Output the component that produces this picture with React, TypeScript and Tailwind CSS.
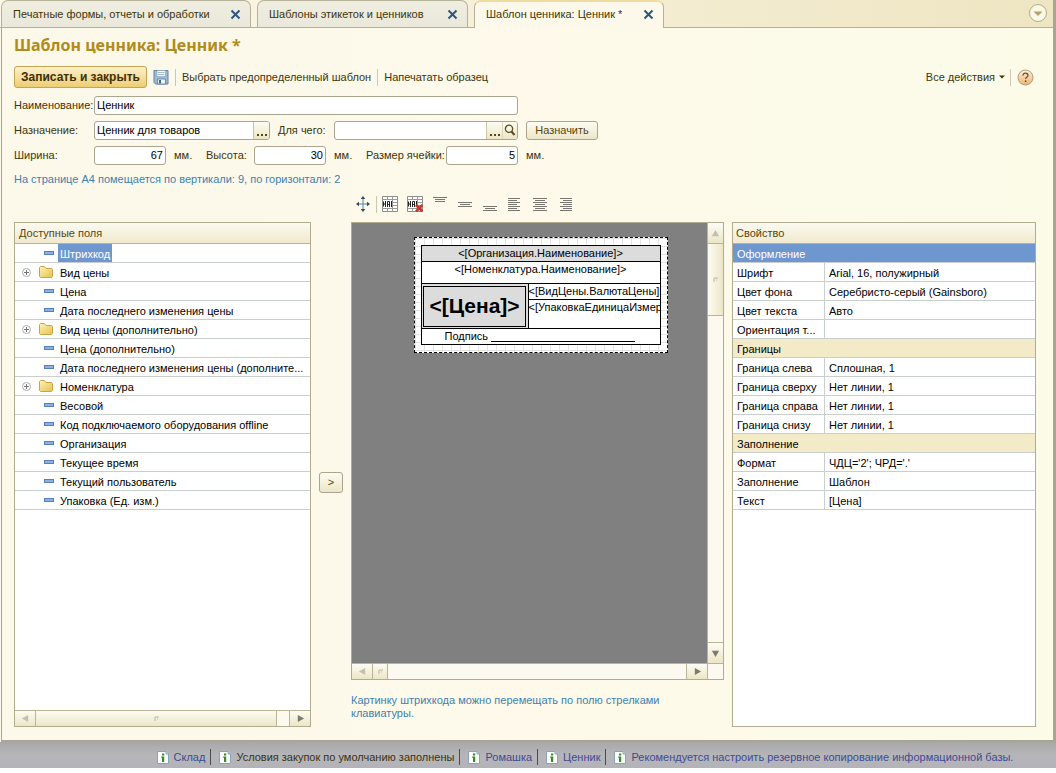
import React from "react";

type Field = { name: string; group?: boolean; selected?: boolean };
type Property = { name: string; value?: string; section?: boolean; selected?: boolean };

const fields: Field[] = [
  { name: "Штрихкод", selected: true },
  { name: "Вид цены", group: true },
  { name: "Цена" },
  { name: "Дата последнего изменения цены" },
  { name: "Вид цены (дополнительно)", group: true },
  { name: "Цена (дополнительно)" },
  { name: "Дата последнего изменения цены (дополните..." },
  { name: "Номенклатура", group: true },
  { name: "Весовой" },
  { name: "Код подключаемого оборудования offline" },
  { name: "Организация" },
  { name: "Текущее время" },
  { name: "Текущий пользователь" },
  { name: "Упаковка (Ед. изм.)" },
];

const properties: Property[] = [
  { name: "Оформление", section: true, selected: true },
  { name: "Шрифт", value: "Arial, 16, полужирный" },
  { name: "Цвет фона", value: "Серебристо-серый (Gainsboro)" },
  { name: "Цвет текста", value: "Авто" },
  { name: "Ориентация т...", value: "" },
  { name: "Границы", section: true },
  { name: "Граница слева", value: "Сплошная, 1" },
  { name: "Граница сверху", value: "Нет линии, 1" },
  { name: "Граница справа", value: "Нет линии, 1" },
  { name: "Граница снизу", value: "Нет линии, 1" },
  { name: "Заполнение", section: true },
  { name: "Формат", value: "ЧДЦ='2'; ЧРД='.'" },
  { name: "Заполнение", value: "Шаблон" },
  { name: "Текст", value: "[Цена]" },
];

const messages = [
  { text: "Склад" },
  { text: "Условия закупок по умолчанию заполнены", plain: true },
  { text: "Ромашка" },
  { text: "Ценник" },
  { text: "Рекомендуется настроить резервное копирование информационной базы." },
];

const boxClass =
  "flex h-[19px] overflow-hidden rounded-[3px] border border-[#aaa58c] bg-white text-black";
const inputClass = "w-full min-w-0 bg-transparent px-[2px] text-[11px] leading-[17px] outline-none";
const faceClass = "bg-linear-to-b from-[#fdfcf2] to-[#ece6c8] text-[#54470f]";

function CloseIcon() {
  return (
    <svg width="11" height="11" viewBox="0 0 11 11" fill="none" stroke="#2d5580" strokeWidth="2">
      <path d="M1.5 1.5 9.5 9.5M9.5 1.5 1.5 9.5" />
    </svg>
  );
}

function Tab({ title, active, width }: { title: string; active?: boolean; width: string }) {
  return (
    <div
      className={`flex items-center justify-between rounded-t-[7px] border border-b-0 border-[#b5b199] pl-[11px] pr-[9px] ${width} ${
        active
          ? "h-7 border-t-2 border-t-[#efdca0] bg-[#fdf9ea] pb-[2px]"
          : "h-[27px] bg-linear-to-b from-[#f0eee0] to-[#e9e8da]"
      }`}
    >
      <button role="tab" aria-selected={!!active} className="truncate text-[11px] text-[#403408]">
        {title}
      </button>
      <button aria-label={`Закрыть: ${title}`}>
        <CloseIcon />
      </button>
    </div>
  );
}

function Separator() {
  return <span className="h-[17px] w-px bg-[#cbc7b2]" />;
}

function SaveIcon() {
  return (
    <svg width="16" height="16" viewBox="0 0 16 16">
      <path d="M1 1.5h14v13.5H2.5L1 13.5Z" fill="#9dbdd6" stroke="#5e83a3" />
      <path d="M4 1.5h8.5v6H4z" fill="#f3f8fb" stroke="#7f9fb9" strokeWidth=".6" />
      <path d="M5 3.5h6.5M5 5.5h6.5" stroke="#9ab" strokeWidth=".8" />
      <path d="M4.5 10h8v5h-8z" fill="#eef4f8" stroke="#557a9a" strokeWidth=".8" />
      <path d="M6 11h2v3.5H6z" fill="#3f658a" />
    </svg>
  );
}

function HelpIcon() {
  return (
    <svg width="17" height="17" viewBox="0 0 17 17">
      <defs>
        <linearGradient id="help" x1="0" y1="0" x2="0" y2="1">
          <stop offset="0" stopColor="#fdf0df" />
          <stop offset="1" stopColor="#eeb36b" />
        </linearGradient>
      </defs>
      <circle cx="8.500" cy="8.500" r="7.500" fill="url(#help)" stroke="#b49a7c" />
      <path
        d="M6 6.600C6 4.900 7.100 4.200 8.500 4.200S11 5 11 6.400C11 8 8.600 8 8.600 10"
        fill="none"
        stroke="#6b5334"
        strokeWidth="1.300"
      />
      <circle cx="8.600" cy="12.200" r=".9" fill="#6b5334" />
    </svg>
  );
}

function SearchIcon() {
  return (
    <svg width="12" height="13" viewBox="0 0 12 13" fill="none" stroke="#5a4c1c">
      <circle cx="5" cy="4.800" r="3.600" strokeWidth="1.300" />
      <path d="M7.500 7.500 10.500 11" strokeWidth="2" />
    </svg>
  );
}

function DotsIcon() {
  return (
    <svg width="12" height="17" viewBox="0 0 12 17" fill="#54470f">
      <path d="M1 12h2v2H1zM5 12h2v2H5zM9 12h2v2H9z" />
    </svg>
  );
}

function MoveIcon() {
  return (
    <svg width="16" height="16" viewBox="0 0 16 16">
      <path d="M8 2.500v11M2.500 8h11" stroke="#4d86b3" />
      <path
        d="M8 0 10.300 3H5.700ZM8 16l2.300-3H5.700ZM1 8l3-2.300v4.600ZM15 8l-3-2.300v4.600Z"
        fill="#34495c"
      />
    </svg>
  );
}

function CellIcon({ remove }: { remove?: boolean }) {
  return (
    <svg width="16" height="16" viewBox="0 0 16 16">
      <path d="M.5.5h15v15H.5z" fill="#fff" stroke="#8a8a8a" />
      <path
        d="M.5 3.500h15M.5 12.500h15M5.500.5v3M10.500.5v15M5.500 12.500v3M10.500 6.500h5M10.500 9.500h5"
        stroke="#9a9a9a"
        fill="none"
      />
      <path d="M1.500 5.500v5M3.500 5v6M1.500 8h2M5.500 11V5.500h2V11M5.500 8.500h2" stroke="#222" fill="none" />
      <path d="M9.500 5v6" stroke="#222" />
      {remove && (
        <path d="M9 9 15.500 15.500M15.500 9 9 15.500" stroke="#c3392f" strokeWidth="2.600" />
      )}
    </svg>
  );
}

function LinesIcon({ d }: { d: string }) {
  return (
    <svg width="16" height="16" viewBox="0 0 16 16" fill="none" stroke="#77776f">
      <path d={d} />
    </svg>
  );
}

const alignments = [
  { label: "По верху", d: "M1 1.500h14M3 3.500h10M3 5.500h10" },
  { label: "По центру по вертикали", d: "M1 6.500h14M3 8.500h10M1 10.500h14" },
  { label: "По низу", d: "M1 10.500h14M3 12.500h10M1 14.500h14" },
  {
    label: "По левому краю",
    d: "M1 2.500h12M1 4.500h9M1 6.500h12M1 8.500h9M1 10.500h12M1 12.500h9M1 14.500h12",
  },
  {
    label: "По центру",
    d: "M1 2.500h14M3 4.500h10M1 6.500h14M3 8.500h10M1 10.500h14M3 12.500h10M1 14.500h14",
  },
  {
    label: "По правому краю",
    d: "M3 2.500h12M6 4.500h9M3 6.500h12M6 8.500h9M3 10.500h12M6 12.500h9M3 14.500h12",
  },
];

function FolderIcon() {
  return (
    <svg width="14" height="12" viewBox="0 0 14 12">
      <defs>
        <linearGradient id="folder" x1="0" y1="0" x2="1" y2="1">
          <stop offset="0" stopColor="#fff3b8" />
          <stop offset="1" stopColor="#e6c04e" />
        </linearGradient>
      </defs>
      <path
        d="M.5 1.500 1.500.5h4l1.500 2h5.500l1 1v7l-1 1h-11l-1-1Z"
        fill="url(#folder)"
        stroke="#c8a548"
      />
    </svg>
  );
}

function ExpandIcon() {
  return (
    <svg width="9" height="9" viewBox="0 0 9 9" fill="none">
      <circle cx="4.500" cy="4.500" r="4" stroke="#aaa" />
      <path d="M2 4.500h5M4.500 2v5" stroke="#777" />
    </svg>
  );
}

function InfoIcon() {
  return (
    <svg width="12" height="13" viewBox="0 0 12 13">
      <path d="M.5.5h8.500L11.500 3v9.500H.5Z" fill="#fafdff" stroke="#8aa3b5" />
      <path d="M9 .5V3h2.500" fill="#cfe0ea" stroke="#8aa3b5" />
      <path d="M5 2.500h2.200v2H5zM4.200 5.500h3V11H5V6.800h-.8z" fill="#3d8527" />
    </svg>
  );
}

function Arrow({ dir, dim }: { dir: "left" | "right" | "up" | "down"; dim?: boolean }) {
  const d = {
    left: "M8 1v8L1 5Z",
    right: "M2 1v8l7-4Z",
    up: "M1 8h8L5 1Z",
    down: "M1 2h8L5 9Z",
  }[dir];
  return (
    <svg width="9" height="9" viewBox="0 0 10 10">
      <path d={d} fill={dim ? "#c3c0b2" : "#7d7a6e"} />
    </svg>
  );
}

function ScrollButton(props: { dir: "left" | "right" | "up" | "down"; dim?: boolean; label: string }) {
  const edge = {
    left: "w-[21px] border-r",
    right: "w-[21px] border-l",
    up: "h-[21px] border-b",
    down: "h-[21px] border-t",
  }[props.dir];
  return (
    <button
      aria-label={props.label}
      className={`flex shrink-0 items-center justify-center border-[#b9b594] ${faceClass} ${edge}`}
    >
      <Arrow dir={props.dir} dim={props.dim} />
    </button>
  );
}

function Grip() {
  return (
    <svg width="5" height="5" viewBox="0 0 5 5" fill="none" stroke="#b9b6a4">
      <path d="M1 5V1h4M3 3h1" />
    </svg>
  );
}

function FieldsPanel() {
  return (
    <section className="flex min-w-0 flex-col border border-[#b1ac90] bg-white">
      <h2 className="h-[21px] border-b border-[#b9b594] bg-linear-to-b from-[#fbfaf0] to-[#f1e9cd] pl-1 leading-[20px] text-[#54470f]">
        Доступные поля
      </h2>
      <ul role="tree" aria-label="Доступные поля" className="flex-1 text-black">
        {fields.map((f) => (
          <li
            key={f.name}
            role="treeitem"
            aria-selected={!!f.selected}
            className="flex h-[19px] items-center border-b border-[#c9cfcf]"
          >
            <span className="flex w-[24px] shrink-0 items-center pl-[7px]">
              {f.group && <ExpandIcon />}
            </span>
            <span className="flex w-[19px] shrink-0 items-center">
              {f.group ? (
                <FolderIcon />
              ) : (
                <span className="ml-[5px] h-[4px] w-[10px] border border-[#5580bd] bg-[#8fb0dc]" />
              )}
            </span>
            <span
              className={`truncate px-[2px] pt-[2px] leading-[16px] ${
                f.selected ? "bg-[#6f97cf] text-white" : ""
              }`}
            >
              {f.name}
            </span>
          </li>
        ))}
      </ul>
      <div className="flex h-4 border-t border-[#b9b594] bg-[#fcfaf0]">
        <ScrollButton dir="left" dim label="Прокрутить влево" />
        <div
          className={`flex flex-1 items-center justify-center border-r border-[#b9b594] ${faceClass}`}
        >
          <Grip />
        </div>
        <div className="w-3" />
        <ScrollButton dir="right" label="Прокрутить вправо" />
      </div>
    </section>
  );
}

function PriceTag() {
  return (
    <div className="border border-dashed border-black bg-white bg-[linear-gradient(to_right,#e4e4e4_1px,transparent_1px),linear-gradient(to_bottom,#e4e4e4_1px,transparent_1px)] bg-[size:9px_8px] px-[6px] py-[7px] text-black">
      <table className="w-[240px] table-fixed border-collapse bg-white">
        <colgroup>
          <col className="w-[107px]" />
          <col />
        </colgroup>
        <tbody>
          <tr className="h-[16px]">
            <td colSpan={2} className="border border-black bg-[#dcdcdc] p-0 text-center leading-[15px]">
              &lt;[Организация.Наименование]&gt;
            </td>
          </tr>
          <tr className="h-[22px]">
            <td colSpan={2} className="border border-black p-0 text-center align-top leading-[15px]">
              &lt;[Номенклатура.Наименование]&gt;
            </td>
          </tr>
          <tr className="h-[16px]">
            <td
              rowSpan={2}
              className="border border-black bg-[#dcdcdc] p-0 text-center text-[21px] font-bold leading-[22px] outline outline-1 -outline-offset-3 outline-black"
            >
              &lt;[Цена]&gt;
            </td>
            <td className="overflow-hidden whitespace-nowrap border border-black p-0 leading-[15px]">
              &lt;[ВидЦены.ВалютаЦены]&gt;
            </td>
          </tr>
          <tr className="h-[29px]">
            <td className="overflow-hidden whitespace-nowrap border border-black p-0 align-top leading-[15px]">
              &lt;[УпаковкаЕдиницаИзмер
            </td>
          </tr>
          <tr className="h-[16px]">
            <td colSpan={2} className="border border-black p-0 leading-[15px]">
              <span className="flex items-end pl-[23px]">
                Подпись
                <span className="mb-[2px] ml-[3px] w-[144px] border-b border-black" />
              </span>
            </td>
          </tr>
        </tbody>
      </table>
    </div>
  );
}

function DesignCanvas() {
  return (
    <div className="grid flex-1 grid-cols-[1fr_16px] grid-rows-[1fr_16px] border border-[#b1ac90] bg-[#fcfaf0]">
      <div className="flex min-w-0 items-start justify-center overflow-hidden bg-[#808080] pl-[22px] pt-[14px]">
        <PriceTag />
      </div>
      <div className="flex flex-col border-l border-[#b9b594]">
        <ScrollButton dir="up" dim label="Прокрутить вверх" />
        <div className="flex h-[72px] items-center justify-center border-b border-[#b9b594] bg-linear-to-r from-[#fdfcf2] to-[#ece6c8]">
          <Grip />
        </div>
        <div className="flex-1" />
        <ScrollButton dir="down" label="Прокрутить вниз" />
      </div>
      <div className="flex border-t border-[#b9b594]">
        <ScrollButton dir="left" dim label="Прокрутить влево" />
        <div className={`flex w-[15px] items-center justify-center border-r border-[#b9b594] ${faceClass}`}>
          <Grip />
        </div>
        <div className="flex-1" />
        <ScrollButton dir="right" label="Прокрутить вправо" />
      </div>
      <div className="border-l border-t border-[#b9b594]" />
    </div>
  );
}

function PropertiesPanel() {
  return (
    <section className="min-w-0 border border-[#b1ac90] bg-white text-black">
      <table className="w-full table-fixed border-separate border-spacing-0">
        <colgroup>
          <col className="w-[92px]" />
          <col />
        </colgroup>
        <thead>
          <tr>
            <th
              colSpan={2}
              className="border-b border-[#b9b594] bg-linear-to-b from-[#fbfaf0] to-[#f1e9cd] p-0 pl-[3px] text-left font-normal leading-[20px] text-[#54470f]"
            >
              Свойство
            </th>
          </tr>
        </thead>
        <tbody>
          {properties.map((p, i) =>
            p.section ? (
              <tr key={i} className={p.selected ? "bg-[#6f97cf] text-white" : "bg-[#f3ebc8]"}>
                <th
                  colSpan={2}
                  className="border-b border-[#c9cfcf] p-0 pl-[4px] pt-[2px] text-left font-normal leading-[16px]"
                >
                  {p.name}
                </th>
              </tr>
            ) : (
              <tr key={i} className="h-[19px]">
                <th className="truncate border-b border-r border-[#c9cfcf] p-0 pl-[4px] pt-[2px] text-left font-normal leading-[16px]">
                  {p.name}
                </th>
                <td className="truncate border-b border-[#c9cfcf] p-0 pl-[4px] pt-[2px] leading-[16px]">
                  {p.value}
                </td>
              </tr>
            ),
          )}
        </tbody>
      </table>
    </section>
  );
}

export default function App() {
  return (
    <div className="flex min-h-screen flex-col bg-white pb-[5px] font-['Liberation_Sans',Arial,sans-serif] text-[11px] text-[#403408]">
      <div className="flex flex-1 flex-col border-r-[3px] border-[#a9a590] bg-[#fdf9ea]">
        <header className="flex h-7 items-start justify-between border-b border-[#b5b199] bg-linear-to-r from-[#fdf9ea] to-[#eee5c2] pl-px pr-[6px]">
          <div role="tablist" className="flex gap-[6px]">
            <Tab title="Печатные формы, отчеты и обработки" width="w-[250px]" />
            <Tab title="Шаблоны этикеток и ценников" width="w-[211px]" />
            <Tab title="Шаблон ценника: Ценник *" width="w-[190px]" active />
          </div>
          <button aria-label="Список окон" className="mt-1">
            <svg width="18" height="18" viewBox="0 0 18 18">
              <circle cx="9" cy="9" r="8.500" fill="#fbf7e6" stroke="#b5ac80" />
              <path d="M4.500 7.500h9L9 12Z" fill="#b0a36b" />
            </svg>
          </button>
        </header>

        <main className="ml-px flex flex-1 flex-col border-b-2 border-l border-[#a9a590] bg-linear-to-r from-[#fcf9ea] via-[#fef9ea] to-[#fbfbe8] pb-[13px] pl-3 pr-[17px]">
          <h1 className="mt-2 font-['Noto_Sans',sans-serif] text-[16px] font-bold leading-[18px] text-[#b18b1c]">
            Шаблон ценника: Ценник *
          </h1>

          <div className="mt-3 flex h-[22px] items-center justify-between">
            <div className="flex items-center gap-[6px]">
              <button className="h-[22px] rounded-[3px] border border-[#c3a552] bg-linear-to-b from-[#fdf1cb] to-[#eecd72] px-[6px] text-[12px] font-bold text-[#3d2f05]">
                Записать и закрыть
              </button>
              <button aria-label="Записать">
                <SaveIcon />
              </button>
              <Separator />
              <button>Выбрать предопределенный шаблон</button>
              <Separator />
              <button>Напечатать образец</button>
            </div>
            <div className="flex items-center gap-[5px] pr-[2px]">
              <button className="flex items-center gap-1">
                Все действия
                <svg width="6" height="4" viewBox="0 0 6 4">
                  <path d="M0 .5h6L3 3.500Z" fill="#403408" />
                </svg>
              </button>
              <Separator />
              <button aria-label="Справка" className="ml-px">
                <HelpIcon />
              </button>
            </div>
          </div>

          <form className="mt-2 flex flex-col gap-[6px]" onSubmit={(e) => e.preventDefault()}>
            <div className="flex items-center">
              <label htmlFor="name" className="w-20 whitespace-nowrap">
                Наименование:
              </label>
              <span className={`w-[424px] ${boxClass}`}>
                <input id="name" defaultValue="Ценник" className={inputClass} />
              </span>
            </div>
            <div className="flex items-center">
              <label htmlFor="purpose" className="w-20">
                Назначение:
              </label>
              <span className={`w-[176px] ${boxClass}`}>
                <input id="purpose" defaultValue="Ценник для товаров" className={inputClass} />
                <button
                  aria-label="Выбрать назначение"
                  className={`flex w-4 shrink-0 justify-center border-l border-[#c9c4a6] ${faceClass}`}
                >
                  <DotsIcon />
                </button>
              </span>
              <label htmlFor="target" className="ml-2 w-14">
                Для чего:
              </label>
              <span className={`w-[184px] ${boxClass}`}>
                <input id="target" className={inputClass} />
                <button
                  aria-label="Выбрать"
                  className={`flex w-4 shrink-0 justify-center border-l border-[#c9c4a6] ${faceClass}`}
                >
                  <DotsIcon />
                </button>
                <button
                  aria-label="Найти"
                  className={`flex w-[15px] shrink-0 items-center justify-center border-l border-[#ddd8bd] ${faceClass}`}
                >
                  <SearchIcon />
                </button>
              </span>
              <button
                className={`ml-2 h-[19px] w-[72px] rounded-[3px] border border-[#aaa58c] ${faceClass}`}
              >
                Назначить
              </button>
            </div>
            <div className="flex items-center">
              <label htmlFor="width" className="w-20">
                Ширина:
              </label>
              <span className={`w-[72px] ${boxClass}`}>
                <input id="width" defaultValue="67" className={`text-right ${inputClass}`} />
              </span>
              <span className="ml-2 w-6">мм.</span>
              <label htmlFor="height" className="ml-2 w-12">
                Высота:
              </label>
              <span className={`w-[72px] ${boxClass}`}>
                <input id="height" defaultValue="30" className={`text-right ${inputClass}`} />
              </span>
              <span className="ml-2 w-6">мм.</span>
              <label htmlFor="cell" className="ml-2 w-20 whitespace-nowrap">
                Размер ячейки:
              </label>
              <span className={`w-[72px] ${boxClass}`}>
                <input id="cell" defaultValue="5" className={`text-right ${inputClass}`} />
              </span>
              <span className="ml-2">мм.</span>
            </div>
          </form>

          <p className="mt-[6px] leading-[16px] text-[#4080b0]">
            На странице A4 помещается по вертикали: 9, по горизонтали: 2
          </p>

          <div className="mt-[9px] grid flex-1 grid-cols-[297fr_24px_373fr_304fr] grid-rows-[16px_1fr] gap-x-2 gap-y-[10px]">
            <div role="toolbar" aria-label="Макет" className="col-start-3 flex items-center gap-[9px] pl-1">
              <button aria-label="Переместить">
                <MoveIcon />
              </button>
              <span className="-mx-1 h-[17px] w-px bg-[#cbc7b2]" />
              <button aria-label="Объединить ячейки">
                <CellIcon />
              </button>
              <button aria-label="Разъединить ячейки">
                <CellIcon remove />
              </button>
              {alignments.map((a) => (
                <button key={a.label} aria-label={a.label}>
                  <LinesIcon d={a.d} />
                </button>
              ))}
            </div>

            <div className="row-start-2 grid">
              <FieldsPanel />
            </div>
            <button
              aria-label="Добавить поле"
              className={`row-start-2 mt-4 h-[21px] self-center rounded-[3px] border border-[#aaa58c] ${faceClass}`}
            >
              &gt;
            </button>
            <div className="row-start-2 flex min-w-0 flex-col">
              <DesignCanvas />
              <p className="mb-[7px] mt-[14px] leading-[13px] text-[#4080b0]">
                Картинку штрихкода можно перемещать по полю стрелками клавиатуры.
              </p>
            </div>
            <div className="row-start-2 grid">
              <PropertiesPanel />
            </div>
          </div>
        </main>
      </div>

      <footer className="flex h-[26px] items-center justify-center bg-linear-to-b from-[#a8a8a8] via-[#b6b6ba] to-[#b2b2b8] pl-[114px] pt-1">
        {messages.map((m, i) => (
          <a
            key={m.text}
            href="#"
            className={`flex h-4 items-center gap-[5px] whitespace-nowrap ${
              i < messages.length - 1 ? "mr-2 border-r border-[#4c4c4c] pr-[5px]" : ""
            } ${m.plain ? "text-[#3a3210]" : "text-[#3f4a93]"}`}
          >
            <InfoIcon />
            {m.text}
          </a>
        ))}
      </footer>
    </div>
  );
}
